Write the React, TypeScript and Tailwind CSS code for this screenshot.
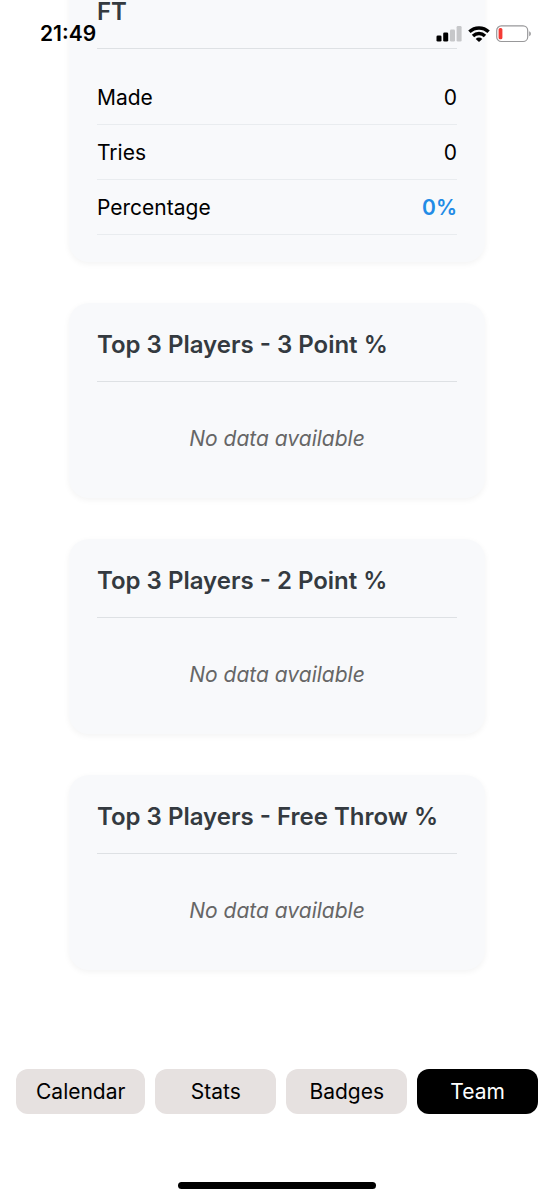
import React from "react";

const shotRows = [
  { label: "Made", value: "0" },
  { label: "Tries", value: "0" },
  { label: "Percentage", value: "0%", highlight: true },
];

const rankings = [
  "Top 3 Players - 3 Point %",
  "Top 3 Players - 2 Point %",
  "Top 3 Players - Free Throw %",
];

const tabs = ["Calendar", "Stats", "Badges", "Team"];

function Card({ title, children }: { title: string; children: React.ReactNode }) {
  return (
    <section className="rounded-[20px] bg-[#f8f9fb] px-7 pt-[30px] pb-[27px] shadow-[0_2px_6px_rgba(0,0,0,0.05)]">
      <h2 className="mb-[21px] border-b border-[#dee1e4] pb-6 text-2xl leading-6 font-semibold text-[#343a40]">
        {title}
      </h2>
      {children}
    </section>
  );
}

function StatusBar() {
  return (
    <header className="absolute inset-x-0 top-0 flex items-center justify-between pt-5 pr-[22px] pl-10">
      <time className="text-[21px] leading-7 font-semibold">21:49</time>
      <div className="flex items-center gap-[6px]">
        <svg width="26" height="16" viewBox="0 0 26 16" aria-hidden="true">
          <rect x="0.5" y="9.5" width="5" height="6" rx="1.3" fill="#000" />
          <rect x="7.2" y="6.5" width="5" height="9" rx="1.3" fill="#000" />
          <rect x="14" y="3.5" width="5" height="12" rx="1.3" fill="#c6c7c9" />
          <rect x="20.6" y="0" width="5" height="15.5" rx="1.3" fill="#c6c7c9" />
        </svg>
        <svg width="22" height="16" viewBox="0 0 22 16" aria-hidden="true" fill="none" stroke="#000" strokeWidth="3.4">
          <path d="M1.4 5.8a14 14 0 0 1 19.2 0" />
          <path d="M5 10a8.6 8.6 0 0 1 12 0" />
          <path d="M11 15.9 7.7 12.9a4.7 4.7 0 0 1 6.6 0Z" fill="#000" stroke="none" />
        </svg>
        <svg width="36" height="18" viewBox="0 0 36 18" aria-hidden="true">
          <rect x="0.7" y="0.9" width="31" height="15.6" rx="4.6" fill="#fff" stroke="#98989a" strokeWidth="1.2" />
          <rect x="2.6" y="3.1" width="3.8" height="11.2" rx="1.5" fill="#f43b35" />
          <path d="M33.2 6.2c2.2.8 2.2 4.2 0 5Z" fill="#98989a" />
        </svg>
      </div>
    </header>
  );
}

export default function App() {
  return (
    <div className="relative flex min-h-screen flex-col overflow-hidden bg-white font-[Inter,sans-serif] text-[21px] leading-7 text-black">
      <StatusBar />
      <main className="-mt-[30px] flex flex-1 flex-col gap-[41px] px-[69px]">
        <Card title="FT">
          <dl>
            {shotRows.map((row) => (
              <div key={row.label} className="flex justify-between border-b border-[#e9ecef] pt-[14px] pb-3">
                <dt>{row.label}</dt>
                <dd className={row.highlight ? "font-semibold text-[#228be6]" : ""}>{row.value}</dd>
              </div>
            ))}
          </dl>
        </Card>
        {rankings.map((title) => (
          <Card key={title} title={title}>
            <p className="pt-[22px] pb-[18px] text-center text-[#666666] italic">No data available</p>
          </Card>
        ))}
      </main>
      <nav className="flex gap-[10px] px-4" aria-label="Sections">
        {tabs.map((tab) => (
          <button
            key={tab}
            type="button"
            aria-current={tab === "Team" ? "page" : undefined}
            className={
              tab === "Team"
                ? "flex-1 rounded-xl bg-black px-5 pt-[9px] pb-2 text-white"
                : "flex-1 rounded-xl bg-[#e6e1e0] px-5 pt-[9px] pb-2 text-black"
            }
          >
            {tab}
          </button>
        ))}
      </nav>
      <footer className="flex justify-center pt-[68px] pb-[11px]">
        <div className="h-[7px] w-[198px] rounded-full bg-black" />
      </footer>
    </div>
  );
}
